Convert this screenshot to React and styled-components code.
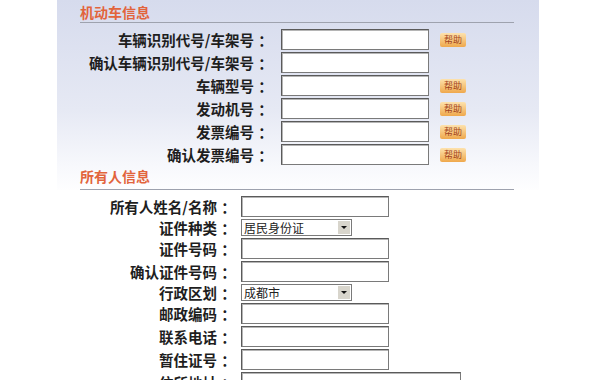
import React from "react";
import styled, { createGlobalStyle } from "styled-components";

const GlobalStyle = createGlobalStyle`
  body {
    margin: 0;
    background: #fff;
    font-family: "Noto Sans CJK SC", "DejaVu Sans", sans-serif;
    color: #222;
  }
`;

const Page = styled.div`
  width: 600px;
  height: 380px;
  overflow: hidden;
  background: #fff;
`;

const Panel = styled.div`
  margin-left: 57px;
  width: 482px;
  padding: 4px 0 0 23px;
  box-sizing: border-box;
  background: linear-gradient(#d6dbed 0, #e6e9f4 110px, #f7f8fc 165px, #fff 195px);
`;

const SectionTitle = styled.div`
  width: 434px;
  font-size: 14px;
  line-height: 16px;
  font-weight: 700;
  color: #e2643c;
  padding-bottom: ${(p) => p.$pad || 2}px;
  border-bottom: 1px solid #9ea2ae;
  margin-top: ${(p) => p.$top || 0}px;
`;

const Rows = styled.div`
  display: grid;
  grid-template-columns: ${(p) => p.$labelWidth}px auto 1fr;
  column-gap: ${(p) => p.$gap}px;
  row-gap: 2px;
  align-items: center;
  margin-top: ${(p) => p.$top}px;
  margin-left: ${(p) => p.$left || 0}px;
`;

const Label = styled.div`
  display: flex;
  justify-content: flex-end;
  font-size: 14.5px;
  line-height: 17px;
  font-weight: 700;
  color: #1e1e1e;
  white-space: nowrap;
`;

const Colon = styled.span`
  width: 15px;
  margin-left: 4px;
  text-align: center;
`;

const TextInput = styled.div`
  box-sizing: border-box;
  width: ${(p) => p.$width || 148}px;
  height: 21px;
  background: #fff;
  border: 1px solid #7a7a7a;
  border-top-color: #5a5a5a;
  border-left-color: #5a5a5a;
  box-shadow: inset 1px 1px 0 #b5b5b5;
`;

const SelectBox = styled.div`
  box-sizing: border-box;
  width: 111px;
  height: 17px;
  display: flex;
  align-items: stretch;
  background: #fff;
  border: 1px solid #7a7a7a;
  font-size: 12px;
  line-height: 15px;
  color: #222;
`;

const SelectText = styled.span`
  flex: 1;
  padding-left: 2px;
`;

const SelectArrow = styled.span`
  width: 12px;
  margin: 1px;
  background: #d8d5cc;
  display: flex;
  align-items: center;
  justify-content: center;
  &::after {
    content: "";
    border-left: 3px solid transparent;
    border-right: 3px solid transparent;
    border-top: 3px solid #111;
  }
`;

const Help = styled.span`
  justify-self: start;
  margin-left: 3px;
  width: 26px;
  height: 14px;
  display: flex;
  align-items: center;
  justify-content: center;
  border-radius: 2px;
  background: linear-gradient(#fde2ad, #efa84c);
  font-size: 9px;
  color: #a2431c;
  line-height: 1;
`;

const vehicleRows = [
  { label: "车辆识别代号/车架号", help: true },
  { label: "确认车辆识别代号/车架号", help: false },
  { label: "车辆型号", help: true },
  { label: "发动机号", help: true },
  { label: "发票编号", help: true },
  { label: "确认发票编号", help: true },
];

const ownerRows = [
  { label: "所有人姓名/名称" },
  { label: "证件种类", select: "居民身份证" },
  { label: "证件号码" },
  { label: "确认证件号码" },
  { label: "行政区划", select: "成都市" },
  { label: "邮政编码" },
  { label: "联系电话" },
  { label: "暂住证号" },
  { label: "住所地址", width: 220 },
];

const App = () => {
  return (
    <Page>
      <GlobalStyle />
      <Panel>
        <SectionTitle>机动车信息</SectionTitle>
        <Rows $labelWidth={193} $gap={8} $top={6}>
          {vehicleRows.map((r) => (
            <React.Fragment key={r.label}>
              <Label>
                {r.label}
                <Colon>：</Colon>
              </Label>
              <TextInput />
              {r.help ? <Help>帮助</Help> : <span />}
            </React.Fragment>
          ))}
        </Rows>
        <SectionTitle $top={3} $pad={5}>所有人信息</SectionTitle>
      </Panel>
      <Rows $labelWidth={156} $gap={5} $top={6} $left={80}>
        {ownerRows.map((r) => (
          <React.Fragment key={r.label}>
            <Label>
              {r.label}
              <Colon>：</Colon>
            </Label>
            {r.select ? (
              <SelectBox>
                <SelectText>{r.select}</SelectText>
                <SelectArrow />
              </SelectBox>
            ) : (
              <TextInput $width={r.width} />
            )}
            <span />
          </React.Fragment>
        ))}
      </Rows>
    </Page>
  );
};

export default App;
